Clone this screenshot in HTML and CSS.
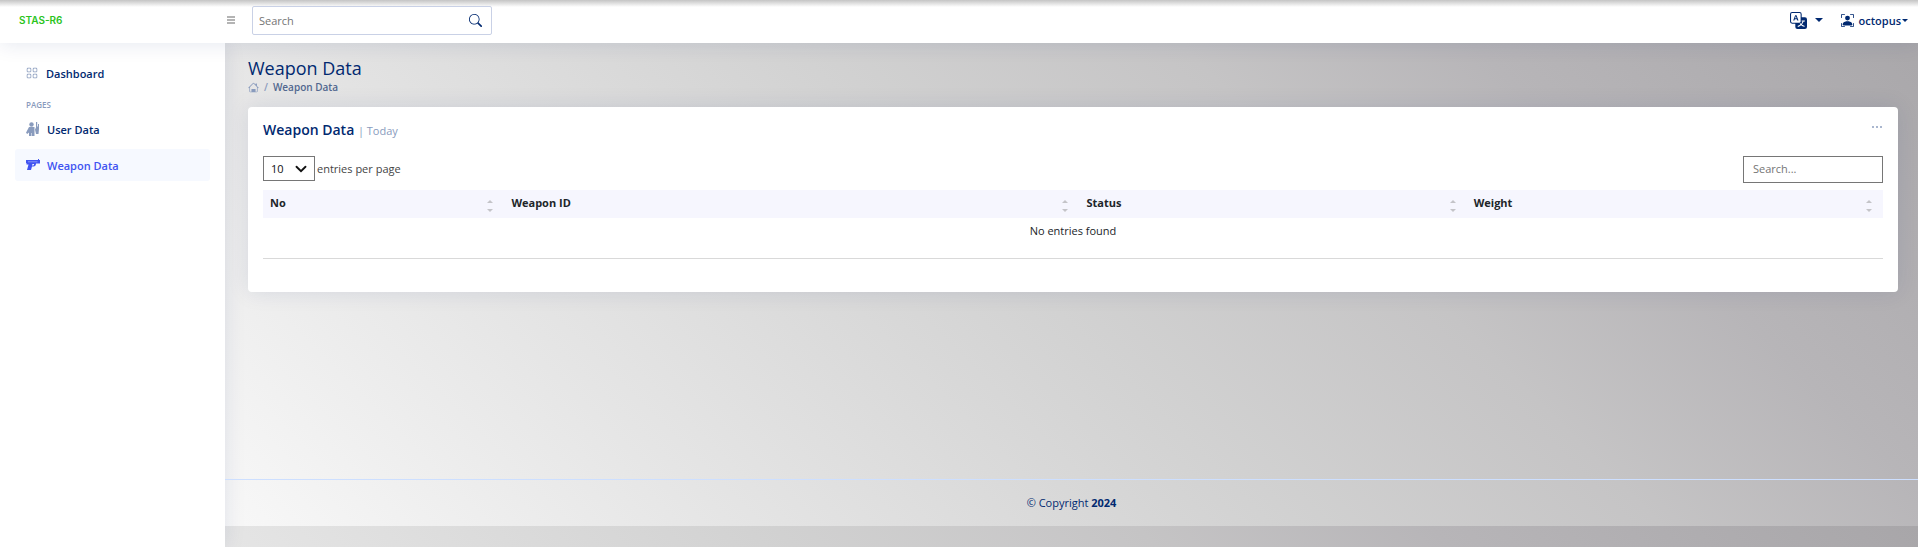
FILE: index.html
```html
<!DOCTYPE html>
<html lang="en">
<head>
<meta charset="utf-8">
<title>Weapon Data</title>
<link rel="stylesheet" href="styles.css">
</head>
<body>
<header class="header">
  <div class="brand"><a class="logo" href="#">STAS-R6</a>
    <button class="toggle" type="button" aria-label="Toggle sidebar"><svg width="12" height="12" viewBox="0 0 12 12"><path d="M2 3h8M2 6h8M2 9h8" stroke="currentColor" stroke-width="2"/></svg></button>
  </div>
  <form class="search">
    <input type="text" placeholder="Search" aria-label="Search">
    <button type="button" aria-label="Submit search"><svg width="13" height="13" viewBox="0 0 16 16" fill="currentColor"><path d="M11.742 10.344a6.5 6.5 0 1 0-1.397 1.398h-.001c.03.04.062.078.098.115l3.85 3.85a1 1 0 0 0 1.415-1.414l-3.85-3.85a1 1 0 0 0-.115-.1zM12 6.5a5.5 5.5 0 1 1-11 0 5.5 5.5 0 0 1 11 0"/></svg></button>
  </form>
  <nav class="tools">
    <button class="lang" type="button" aria-label="Language"><svg width="17" height="17" viewBox="0 0 16 16" fill="currentColor"><path d="M4.545 6.714 4.11 8H3l1.862-5h1.284L8 8H6.833l-.435-1.286zm1.634-.736L5.5 3.956h-.049l-.679 2.022z"/><path d="M0 2a2 2 0 0 1 2-2h7a2 2 0 0 1 2 2v3h3a2 2 0 0 1 2 2v7a2 2 0 0 1-2 2H7a2 2 0 0 1-2-2v-3H2a2 2 0 0 1-2-2zm2-1a1 1 0 0 0-1 1v7a1 1 0 0 0 1 1h7a1 1 0 0 0 1-1V2a1 1 0 0 0-1-1zm7.138 9.995q.289.451.63.846c-.748.575-1.673 1.001-2.768 1.292.178.217.451.635.555.867 1.125-.359 2.08-.844 2.886-1.494.777.665 1.739 1.165 2.93 1.472.133-.254.414-.673.629-.89-1.125-.253-2.057-.694-2.82-1.284.681-.747 1.222-1.651 1.621-2.757H14V8h-3v1.047h.765c-.318.844-.74 1.546-1.272 2.13a6 6 0 0 1-.415-.492 2 2 0 0 1-.94.31"/></svg><span class="caret"></span></button>
    <button class="user" type="button"><svg width="13" height="13" viewBox="0 0 16 16" fill="currentColor"><path d="M1.5 1a.5.5 0 0 0-.5.5v3a.5.5 0 0 1-1 0v-3A1.500 1.500 0 0 1 1.500 0h3a.5.5 0 0 1 0 1zM11 .5a.5.5 0 0 1 .5-.5h3A1.500 1.500 0 0 1 16 1.500v3a.5.5 0 0 1-1 0v-3a.5.5 0 0 0-.5-.5h-3a.5.5 0 0 1-.5-.5M.5 11a.5.5 0 0 1 .5.5v3a.5.5 0 0 0 .5.5h3a.5.5 0 0 1 0 1h-3A1.500 1.500 0 0 1 0 14.500v-3a.5.5 0 0 1 .5-.5m15 0a.5.5 0 0 1 .5.5v3a1.500 1.500 0 0 1-1.500 1.500h-3a.5.5 0 0 1 0-1h3a.5.5 0 0 0 .5-.5v-3a.5.5 0 0 1 .5-.5M3 14s-1 0-1-1 1-4 6-4 6 3 6 4-1 1-1 1zm8-9a3 3 0 1 1-6 0 3 3 0 0 1 6 0"/></svg><span>octopus</span><span class="caret small"></span></button>
  </nav>
</header>
<div class="shell">
  <aside class="sidebar">
    <a class="item first" href="#"><svg width="12" height="12" viewBox="0 0 16 16" fill="currentColor"><path d="M1 2.500A1.500 1.500 0 0 1 2.500 1h3A1.500 1.500 0 0 1 7 2.500v3A1.500 1.500 0 0 1 5.500 7h-3A1.500 1.500 0 0 1 1 5.500zM2.500 2a.5.5 0 0 0-.5.5v3a.5.5 0 0 0 .5.5h3a.5.5 0 0 0 .5-.5v-3a.5.5 0 0 0-.5-.5zm6.500.5A1.500 1.500 0 0 1 10.500 1h3A1.500 1.500 0 0 1 15 2.500v3A1.500 1.500 0 0 1 13.500 7h-3A1.500 1.500 0 0 1 9 5.500zm1.500-.5a.5.5 0 0 0-.5.5v3a.5.5 0 0 0 .5.5h3a.5.5 0 0 0 .5-.5v-3a.5.5 0 0 0-.5-.5zM1 10.500A1.500 1.500 0 0 1 2.500 9h3A1.500 1.500 0 0 1 7 10.500v3A1.500 1.500 0 0 1 5.500 15h-3A1.500 1.500 0 0 1 1 13.500zm1.500-.5a.5.5 0 0 0-.5.5v3a.5.5 0 0 0 .5.5h3a.5.5 0 0 0 .5-.5v-3a.5.5 0 0 0-.5-.5zm6.500.5A1.500 1.500 0 0 1 10.500 9h3a1.500 1.500 0 0 1 1.500 1.500v3a1.500 1.500 0 0 1-1.500 1.500h-3A1.500 1.500 0 0 1 9 13.500zm1.500-.5a.5.5 0 0 0-.5.5v3a.5.5 0 0 0 .5.5h3a.5.5 0 0 0 .5-.5v-3a.5.5 0 0 0-.5-.5z"/></svg><span>Dashboard</span></a>
    <h2 class="heading">Pages</h2>
    <a class="item" href="#"><svg width="14" height="14" viewBox="0 0 14 14" fill="currentColor"><circle cx="5.500" cy="2.500" r="2.200"/><path d="M3 5h5.500v3.500L8.500 14h-2.500v-3h-.5v3H3v-3.500L1.200 12 0 10.800zM10 0h1.200v4.500h.8V2h1v5l-.5 5h-2.500l-1-4.500 1-2z"/></svg><span>User Data</span></a>
    <a class="item active" href="#"><svg width="14" height="14" viewBox="0 0 14 14" fill="currentColor"><path d="M0 2h12V1h1v1h1v3.500h-4c0 2-1 3-2.500 3H6L5 12H1l1.500-5.500H.500V5H0zM6.500 6 6 7.500h1q1 0 1-1V6z" fill-rule="evenodd"/><path d="M2 3.800h9.500" stroke="#9aa5f8" stroke-width=".8"/></svg><span>Weapon Data</span></a>
  </aside>
  <main class="main">
    <h1 class="title">Weapon Data</h1>
    <nav class="crumbs" aria-label="Breadcrumb"><a href="#" aria-label="Home"><svg width="11" height="11" viewBox="0 0 16 16" fill="currentColor"><path d="M8.707 1.500a1 1 0 0 0-1.414 0L.646 8.146a.5.5 0 0 0 .708.708L2 8.207V13.500A1.500 1.500 0 0 0 3.500 15h9a1.500 1.500 0 0 0 1.500-1.500V8.207l.646.647a.5.5 0 0 0 .708-.708L13 5.793V2.500a.5.5 0 0 0-.5-.5h-1a.5.5 0 0 0-.5.5v1.293zM13 7.207V13.500a.5.5 0 0 1-.5.5H11v-4H5v4H3.500a.5.5 0 0 1-.5-.5V7.207l5-5z"/></svg></a><span>/</span><span class="here">Weapon Data</span></nav>
    <section class="card">
      <div class="card-head"><h2>Weapon Data <span>| Today</span></h2>
        <button type="button" aria-label="More"><svg width="12" height="12" viewBox="0 0 12 12" fill="currentColor"><path d="M1 5h2v2H1zM5 5h2v2H5zM9 5h2v2H9z"/></svg></button></div>
      <div class="controls">
        <label><span class="pick"><select><option>10</option></select><svg width="12" height="12" viewBox="0 0 16 16"><path d="m2 5 6 6 6-6" fill="none" stroke="#111" stroke-width="2.500" stroke-linecap="round"/></svg></span> entries per page</label>
        <input class="filter" type="search" placeholder="Search..." aria-label="Search entries">
      </div>
      <table>
        <colgroup><col class="c1"><col class="c2"><col class="c3"><col class="c4"></colgroup>
        <thead><tr>
          <th><button type="button">No<i></i></button></th><th><button type="button">Weapon ID<i></i></button></th><th><button type="button">Status<i></i></button></th><th><button type="button">Weight<i></i></button></th>
        </tr></thead>
        <tbody><tr><td colspan="4">No entries found</td></tr></tbody>
      </table>
    </section>
    <footer class="footer">© Copyright <strong>2024</strong></footer>
  </main>
</div>
</body>
</html>
```
FILE: styles.css
```css
* { box-sizing: border-box; }
html { min-height: 100%; background: linear-gradient(45deg, #fff 0%, #f7f7f7 10%, #e5e5e5 30%, #d2d2d2 52%, #c5c4c5 68%, #b7b5b8 80%, #a8a6a9 100%) 0 0 / 100% 526px; }
body { margin: 0; font: 11px/17px "Open Sans", sans-serif; color: #444; }
button { font: inherit; color: inherit; background: none; border: 0; padding: 0; }
svg { display: block; flex: none; }
a { color: inherit; text-decoration: none; }
h1, h2 { margin: 0; }

.header { position: relative; z-index: 2; display: flex; align-items: center; height: 43px; padding: 0 10px 3px 19px; background: linear-gradient(#c4c4c4, #fff 7px); box-shadow: 0 2px 20px rgba(1, 41, 112, .1); color: #012970; }
.brand { display: flex; justify-content: space-between; width: 233px; padding-right: 15px; align-items: center; }
.logo { font: 600 10px/16px Inter, sans-serif; color: #2bc41e; }
.toggle { color: #b4b4b4; }
.toggle, .user, .lang { cursor: pointer; }
.search { display: flex; align-items: center; width: 240px; height: 29px; background: #fff; border: 1px solid #c9d1e6; border-radius: 2px; padding: 0 9px 0 6px; }
.search input { flex: 1; min-width: 0; border: 0; outline: 0; padding: 0; background: none; font: inherit; }
.search ::placeholder, .filter::placeholder { color: #757575; opacity: 1; }
.tools { display: flex; margin-left: auto; gap: 18px; font-weight: 600; }
.lang, .user { display: flex; align-items: center; }
.lang { gap: 8px; }
.user svg { margin-right: 5px; }
.caret { border: 4px solid transparent; border-top-color: currentColor; border-bottom: 0; }
.caret.small { border-width: 3px 3px 0; margin-left: 1px; }

.shell { display: flex; min-height: calc(100vh - 43px); }
.sidebar { flex: 0 0 225px; display: flex; flex-direction: column; background: #fff; padding: 14px 15px; box-shadow: 0 0 20px rgba(1, 41, 112, .1); }
.item { display: flex; align-items: center; gap: 7px; height: 32px; padding: 0 11px; border-radius: 3px; font-weight: 600; color: #012970; margin-bottom: 4px; }
.item svg { color: #899bbd; }
.item.active, .item.active svg { color: #4154f1; }
.item.active { background: #f6f9ff; }
.item.first { gap: 8px; margin-bottom: 8px; }
.heading { font-size: 8px; line-height: 16px; font-weight: 600; text-transform: uppercase; color: #899bbd; padding: 0 11px; }

.main { flex: 1; min-width: 0; }
.title { padding: 14px 23px 0; font: 500 18px/22px "Open Sans", sans-serif; color: #012970; }
.crumbs { display: flex; gap: 5px; align-items: center; padding: 0 23px; margin-bottom: 11px; font: 600 10px/17px "Open Sans", sans-serif; color: #899bbd; }
.here { color: #51678f; }
.card { margin: 0 20px 0 23px; padding: 12px 15px 33px; background: #fff; border-radius: 4px; box-shadow: 0 0 22px rgba(1, 41, 112, .1); }
.card-head { display: flex; justify-content: space-between; align-items: flex-start; color: #aab7cf; }
.card-head button { padding-top: 2px; }
.card-head h2 { margin-bottom: 15px; font: 600 14px/22px "Open Sans", sans-serif; color: #012970; }
.card-head h2 span { font-size: 11px; line-height: 17px; color: #899bbd; font-weight: 400; }
.controls { display: flex; justify-content: space-between; align-items: flex-start; margin-bottom: 7px; }
.controls label { display: flex; align-items: center; gap: 2px; }
.pick { display: grid; grid-template-columns: 52px; align-items: center; }
.pick select, .pick svg { grid-area: 1 / 1; }
.pick svg { justify-self: end; margin-right: 8px; pointer-events: none; }
.pick select { appearance: none; width: 100%; height: 25px; border: 1px solid #767676; border-radius: 0; background: #fff; padding: 0 7px; font: inherit; color: #111; }
.filter { width: 140px; height: 27px; border: 1px solid #767676; padding: 0 9px 2px; font: inherit; }
table { width: 100%; border-collapse: collapse; table-layout: fixed; border-bottom: 1px solid #d9d9d9; }
.c1 { width: 14.9%; }
.c2 { width: 35.5%; }
.c3 { width: 23.9%; }
.c4 { width: 25.7%; }
th { height: 28px; padding: 0 11px 0 7px; background: #f6f6fe; font-weight: 700; color: #212529; }
th button { display: flex; width: 100%; height: 26px; justify-content: space-between; line-height: 24px; }
i { display: grid; gap: 6px; align-content: end; padding-bottom: 5px; }
i::before, i::after { content: ""; border: 3px solid transparent; }
i::before { border-top: 0; border-bottom-color: #c4c4c8; }
i::after { border-bottom: 0; border-top-color: #c4c4c8; }
td { height: 40px; padding: 4px 0 0; text-align: center; vertical-align: top; color: #212529; }
.footer { margin-top: 187px; padding: 14px 0 15px; border-top: 1px solid #cddfff; text-align: center; color: #012970; }
```
